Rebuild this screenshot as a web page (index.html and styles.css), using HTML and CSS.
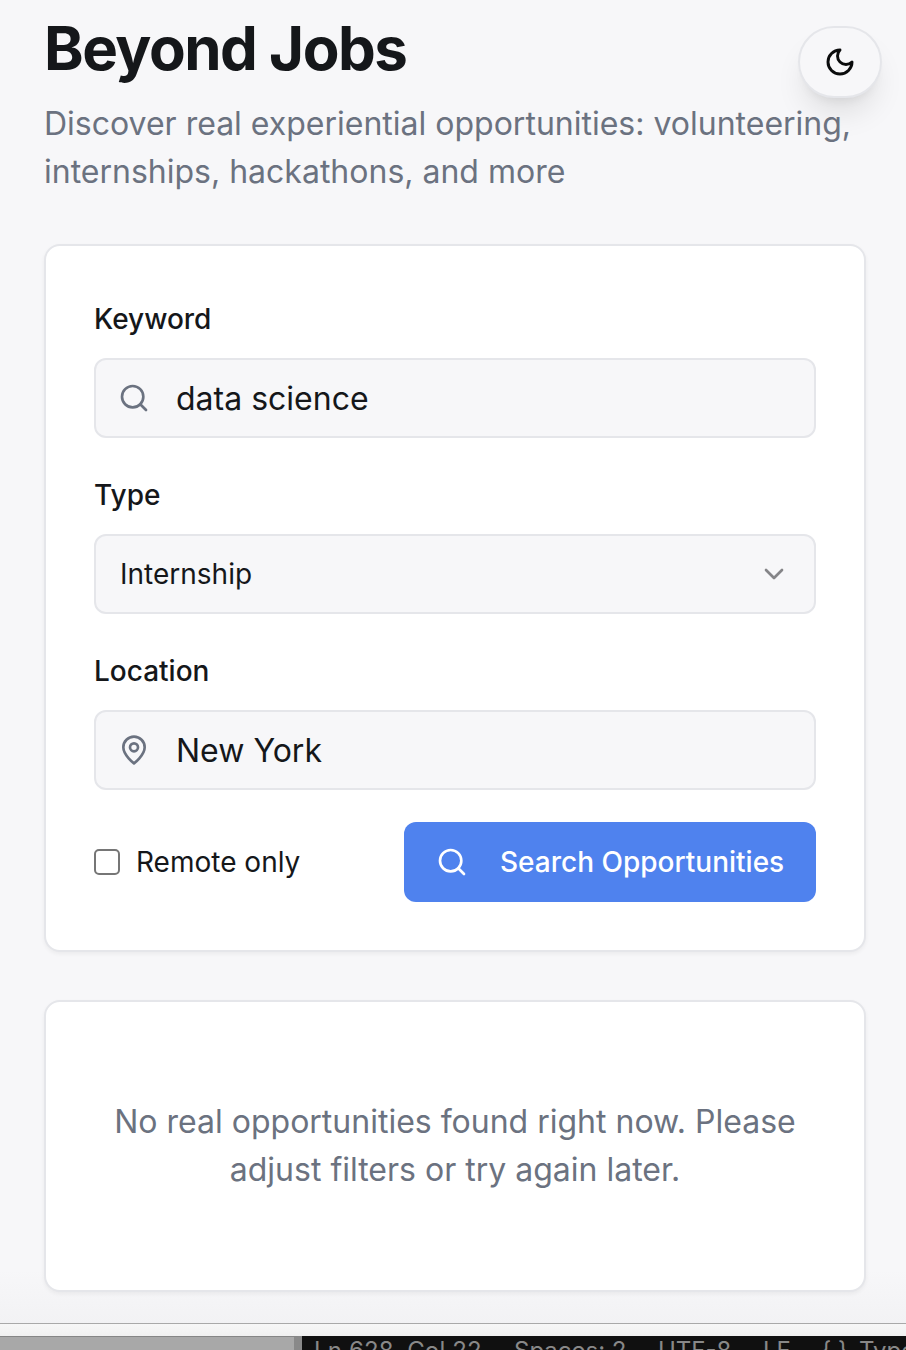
FILE: index.html
```
<!DOCTYPE html>
<html lang="en">
<head>
<meta charset="utf-8">
<title>Beyond Jobs</title>
<link rel="stylesheet" href="styles.css">
</head>
<body>
<div class="screen">
  <main class="page">
    <button class="theme-toggle" type="button" aria-label="Toggle theme">
      <svg class="icon" viewBox="0 0 24 24"><path d="M12 3a6 6 0 0 0 9 9 9 9 0 1 1-9-9Z"/></svg>
    </button>
    <header class="intro">
      <h1 class="title">Beyond Jobs</h1>
      <p class="subtitle">Discover real experiential opportunities: volunteering, internships, hackathons, and more</p>
    </header>
    <form class="card filters">
      <div class="group">
        <div class="label">Keyword</div>
        <div class="field">
          <svg class="icon" viewBox="0 0 24 24"><circle cx="11" cy="11" r="8"/><path d="m21 21-4.3-4.3"/></svg>
          <span class="value">data science</span>
        </div>
      </div>
      <div class="group">
        <div class="label">Type</div>
        <div class="field select">
          <span class="choice">Internship</span>
          <svg class="icon chevron" viewBox="0 0 24 24"><path d="m6 9 6 6 6-6"/></svg>
        </div>
      </div>
      <div class="group">
        <div class="label">Location</div>
        <div class="field">
          <svg class="icon" viewBox="0 0 24 24"><path d="M20 10c0 6-8 12-8 12s-8-6-8-12a8 8 0 0 1 16 0Z"/><circle cx="12" cy="10" r="3"/></svg>
          <span class="value">New York</span>
        </div>
      </div>
      <div class="actions">
        <label class="remote"><input class="checkbox" type="checkbox"><span>Remote only</span></label>
        <button class="submit" type="button">
          <svg class="icon" viewBox="0 0 24 24"><circle cx="11" cy="11" r="8"/><path d="m21 21-4.3-4.3"/></svg>
          <span>Search Opportunities</span>
        </button>
      </div>
    </form>
    <section class="card empty">
      <p class="message">No real opportunities found right now. Please adjust filters or try again later.</p>
    </section>
  </main>
  <div class="window-edge"></div>
  <footer class="editor">
    <div class="panel"></div>
    <div class="status">
      <span class="cursor">Ln 628, Col 22</span>
      <span class="spaces">Spaces: 2</span>
      <span class="encoding">UTF-8</span>
      <span class="eol">LF</span>
      <span class="braces">{ }</span>
      <span class="language">TypeScript</span>
    </div>
  </footer>
</div>
</body>
</html>
```
FILE: styles.css
```
* { box-sizing: border-box; }

body {
  margin: 0;
  background: #f7f7f9;
  color: #15171a;
  font-family: Inter, "Liberation Sans", sans-serif;
}

h1, p { margin: 0; }

.screen {
  display: flex;
  flex-direction: column;
  height: 1350px;
  overflow: hidden;
}

.page {
  position: relative;
  flex: none;
  display: flex;
  flex-direction: column;
  gap: 48px;
  height: 1323px;
  padding: 12px 40px 0 44px;
  background: linear-gradient(#f7f7f9 0, #f7f7f9 1270px, #f2f2f4 1323px);
}

.icon {
  flex: none;
  width: 32px;
  height: 32px;
  fill: none;
  stroke: currentColor;
  stroke-width: 2;
  stroke-linecap: round;
  stroke-linejoin: round;
}

.theme-toggle {
  position: absolute;
  top: 26px;
  right: 24px;
  display: flex;
  align-items: center;
  justify-content: center;
  width: 84px;
  height: 72px;
  padding: 0;
  border: 2px solid #e5e6ea;
  border-radius: 36px;
  background: #f7f7f9;
  color: #0a0b0c;
  box-shadow: 0 20px 30px -6px rgb(0 0 0 / 10%), 0 8px 12px -8px rgb(0 0 0 / 10%);
}

.theme-toggle .icon { stroke-width: 2.2; }

.intro {
  display: flex;
  flex-direction: column;
  gap: 16px;
}

.title {
  font-size: 60px;
  line-height: 72px;
  font-weight: 700;
  letter-spacing: -1.5px;
}

.subtitle {
  position: relative;
  color: #6b7280;
  font-size: 32px;
  line-height: 48px;
}

.card {
  width: 822px;
  border: 2px solid #e5e6ea;
  border-radius: 16px;
  background: #fff;
  box-shadow: 0 2px 4px rgb(0 0 0 / 5%);
}

.filters {
  display: flex;
  flex-direction: column;
  gap: 32px;
  padding: 48px;
}

.group {
  display: flex;
  flex-direction: column;
  gap: 15px;
}

.label {
  padding-top: 1px;
  font-size: 28px;
  line-height: 48px;
  font-weight: 500;
}

.field {
  display: flex;
  align-items: center;
  gap: 26px;
  height: 80px;
  padding: 0 22px;
  border: 2px solid #e5e6ea;
  border-radius: 12px;
  background: #f7f7f9;
  color: #6b7280;
}

.value {
  color: #15171a;
  font-size: 32px;
}

.select {
  justify-content: space-between;
  padding: 0 24px;
}

.choice {
  color: #15171a;
  font-size: 28px;
}

.chevron { color: #858588; }

.actions {
  display: flex;
  align-items: center;
  justify-content: space-between;
}

.remote {
  display: flex;
  align-items: center;
  gap: 16px;
  font-size: 28px;
}

.checkbox {
  appearance: none;
  width: 26px;
  height: 26px;
  margin: 0;
  border: 2px solid #767676;
  border-radius: 5px;
  background: #fff;
}

.submit {
  display: flex;
  align-items: center;
  gap: 32px;
  width: 412px;
  height: 80px;
  padding: 0 32px;
  border: 0;
  border-radius: 12px;
  background: #4f82ee;
  color: #fff;
  font: 500 28px Inter, "Liberation Sans", sans-serif;
  white-space: nowrap;
}

.empty { padding: 96px 48px; }

.message {
  color: #6b7280;
  font-size: 32px;
  line-height: 48px;
  text-align: center;
}

.window-edge {
  flex: none;
  height: 13px;
  border-top: 1px solid #a9a9a9;
  background: linear-gradient(#f7f7f7, #f0f0f0);
}

.editor {
  display: flex;
  height: 14px;
  overflow: hidden;
}

.panel {
  flex: none;
  width: 302px;
  border-top: 1px solid #858585;
  border-right: 8px solid #898989;
  background: #a8a8a8;
}

.status {
  flex: none;
  display: flex;
  width: 604px;
  padding: 3px 0 0 12px;
  overflow: hidden;
  background: #101010;
  color: #888;
  font-size: 24px;
  line-height: 24px;
  white-space: nowrap;
}

.cursor { flex: none; width: 200px; letter-spacing: 0.15px; }
.spaces { flex: none; width: 144px; }
.encoding { flex: none; width: 105px; }
.eol { flex: none; width: 58px; }
.braces { flex: none; width: 37px; margin-right: 1px; }
.language { flex: none; }
```
